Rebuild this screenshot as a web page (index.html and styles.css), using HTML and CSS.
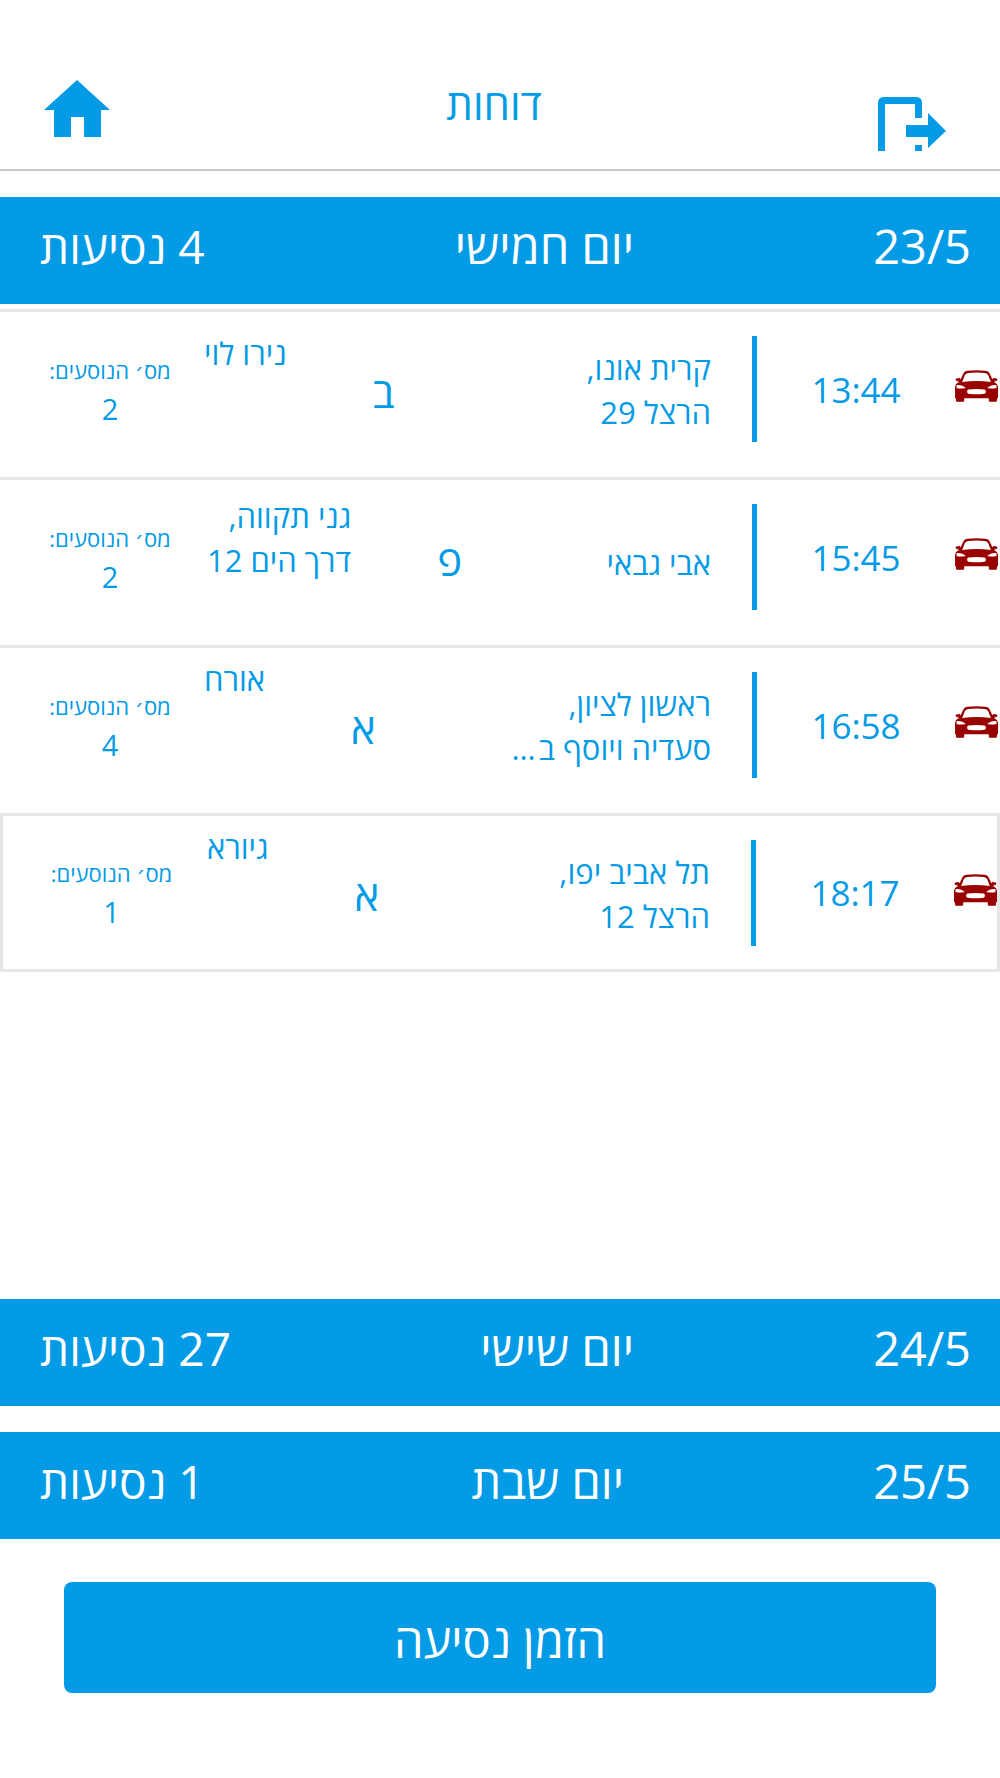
FILE: index.html
```html
<!DOCTYPE html>
<html lang="he" dir="rtl">
<head>
	<meta charset="UTF-8">
	<title>דוחות</title>
	<link rel="stylesheet" href="styles.css">
</head>
<body>
	<svg class="defs" width="0" height="0" aria-hidden="true">
		<symbol id="car" viewBox="0 0 42 31">
			<path fill-rule="evenodd" d="M5.5 9 L8 3.5 Q9 1 12.5 .7 Q21 -.3 29.5 .7 Q33 1 34 3.5 L36.5 9 L37.5 7.8 L41 8.2 L41.5 10 L38 11.5 Q42 13 42 17 L42 27.5 L41 27.5 L41 30 Q41 31 40 31 L34 31 Q33 31 33 30 L33 27.5 L9 27.5 L9 30 Q9 31 8 31 L2 31 Q1 31 1 30 L1 27.5 L0 27.5 L0 17 Q0 13 4 11.5 L.5 10 L1 8.2 L4.5 7.8 Z M7 11.5 Q21 9.5 35 11.5 L32.5 5 Q31.5 3 29 2.7 Q21 1.8 13 2.7 Q10.5 3 9.5 5 Z M1.5 14.5 Q7 14 10.5 17.5 Q5 18.5 1.5 17.5 Z M40.5 14.5 Q35 14 31.5 17.5 Q37 18.5 40.5 17.5 Z M13 19 Q21 18 29 19 Q31.5 21 29 23 Q21 24 13 23 Q10.5 21 13 19 Z"/>
		</symbol>
	</svg>

	<header class="topbar">
		<svg class="exit-icon" viewBox="0 0 68 54" aria-hidden="true">
			<path d="M0 54 V6 Q0 0 6 0 H38 Q44 0 44 6 V21 H37 V7 H7 V54 Z M37 48 H44 V54 H37 Z M28 28 H50 V16 L68 34 L50 51 V40 H28 Z"/>
		</svg>
		<h1 class="title">דוחות</h1>
		<svg class="home-icon" viewBox="0 0 66 57" aria-hidden="true">
			<path d="M33 0 L66 30 H57 V57 H40 V37 H27 V57 H10 V30 H0 Z"/>
		</svg>
	</header>

	<section class="day day-open">
		<div class="day-bar">
			<span class="day-date">23/5</span>
			<span class="day-name">יום חמישי</span>
			<span class="day-count">4 נסיעות</span>
		</div>
		<ul class="trips">
			<li class="trip">
				<svg class="car"><use href="#car"/></svg>
				<div class="time">13:44</div>
				<div class="origin">קרית אונו,<br>הרצל 29</div>
				<div class="target">
					<div class="letter">ב</div>
					<div class="dest dest-low">נירו לוי</div>
				</div>
				<div class="pax"><div class="pax-label">מס׳ הנוסעים:</div><div class="pax-num">2</div></div>
			</li>
			<li class="trip">
				<svg class="car"><use href="#car"/></svg>
				<div class="time">15:45</div>
				<div class="origin origin-single">אבי גבאי</div>
				<div class="target">
					<div class="letter">פ</div>
					<div class="dest dest-two">גני תקווה,<br>דרך הים 12</div>
				</div>
				<div class="pax"><div class="pax-label">מס׳ הנוסעים:</div><div class="pax-num">2</div></div>
			</li>
			<li class="trip">
				<svg class="car"><use href="#car"/></svg>
				<div class="time">16:58</div>
				<div class="origin">ראשון לציון,<br><span>סעדיה ויוסף ב<span class="dots">…</span></span></div>
				<div class="target">
					<div class="letter">א</div>
					<div class="dest">אורח</div>
				</div>
				<div class="pax"><div class="pax-label">מס׳ הנוסעים:</div><div class="pax-num">4</div></div>
			</li>
			<li class="trip trip-boxed">
				<svg class="car"><use href="#car"/></svg>
				<div class="time">18:17</div>
				<div class="origin">תל אביב יפו,<br>הרצל 12</div>
				<div class="target">
					<div class="letter">א</div>
					<div class="dest">גיורא</div>
				</div>
				<div class="pax"><div class="pax-label">מס׳ הנוסעים:</div><div class="pax-num">1</div></div>
			</li>
		</ul>
	</section>

	<section class="day">
		<div class="day-bar">
			<span class="day-date">24/5</span>
			<span class="day-name">יום שישי</span>
			<span class="day-count">27 נסיעות</span>
		</div>
	</section>

	<section class="day">
		<div class="day-bar">
			<span class="day-date">25/5</span>
			<span class="day-name day-name-shifted">יום שבת</span>
			<span class="day-count">1 נסיעות</span>
		</div>
	</section>

	<button class="order" type="button">הזמן נסיעה</button>
</body>
</html>
```

FILE: styles.css
```css
* {
	box-sizing: border-box;
}

html, body {
	margin: 0;
	padding: 0;
	background: white;
}

body {
	color: #039be5;
	font-family: "Open Sans", "Noto Sans", "DejaVu Sans", sans-serif;
	font-size: 31px;
}

.defs {
	position: absolute;
}

/* top bar */
.topbar {
	display: flex;
	justify-content: space-between;
	height: 171px;
	padding: 0 54px 0 44px;
	border-bottom: 2px solid #c8c8c8;
}

.title {
	margin: 80px 0 0;
	font-size: 42px;
	font-weight: 400;
	line-height: 48px;
}

.exit-icon {
	width: 68px;
	height: 54px;
	margin-top: 97px;
	fill: #039be5;
}

.home-icon {
	width: 66px;
	height: 57px;
	margin-top: 80px;
	fill: #039be5;
}

/* day sections */
.day {
	margin-bottom: 26px;
}

.day:first-of-type {
	margin-top: 26px;
}

.day-bar {
	display: flex;
	align-items: center;
	height: 107px;
	padding: 0 29px 10px 40px;
	background: #039be5;
	color: white;
	font-size: 47px;
}

.day-date {
	width: 337px;
	font-size: 47px;
}

.day-name-shifted {
	margin-right: 10px;
}

.day-count {
	margin-right: auto;
	font-size: 46px;
}

.day-open {
	height: 1076px;
}

/* trips */
.trips {
	margin: 5px 0 0;
	padding: 0;
	list-style: none;
	border-top: 3px solid #e6e6e6;
}

.trip {
	display: flex;
	align-items: center;
	height: 168px;
	padding-bottom: 11px;
	border-bottom: 3px solid #e6e6e6;
}

.trip-boxed {
	height: 159px;
	margin-top: -3px;
	padding-bottom: 0;
	border: 3px solid #e6e6e6;
}

.car {
	flex: none;
	width: 43px;
	height: 32px;
	margin: -6px 2px 0 0;
	fill: #990000;
}

.trip-boxed .car {
	margin-right: 0;
}

.time {
	width: 198px;
	font-size: 35px;
	text-align: center;
}

.origin {
	display: flex;
	flex-direction: column;
	justify-content: center;
	width: 260px;
	height: 106px;
	padding-top: 2px;
	padding-right: 41px;
	border-right: 5px solid #039be5;
	line-height: 44px;
	white-space: nowrap;
	overflow: hidden;
}

.origin-single {
	padding-top: 12px;
}

.dots {
	letter-spacing: 3px;
}

.target {
	flex: 1;
	display: flex;
	justify-content: flex-end;
	align-self: stretch;
	align-items: center;
}

.letter {
	margin-left: 86px;
	padding-top: 4px;
	font-size: 42px;
}

.dest {
	align-self: flex-start;
	padding-top: 9px;
	line-height: 44px;
	white-space: nowrap;
}

.dest-low {
	padding-top: 19px;
}

.dest-two {
	padding-top: 14px;
	padding-left: 3px;
}

.pax {
	width: 204px;
	padding-bottom: 2px;
	padding-left: 16px;
	text-align: center;
}

.trip-boxed .pax {
	padding-left: 13px;
}

.pax-label {
	font-size: 22px;
	line-height: 40px;
}

.pax-num {
	font-size: 29px;
	line-height: 37px;
}

/* bottom button */
.order {
	display: block;
	width: 872px;
	height: 111px;
	margin: 43px auto 0;
	padding-top: 6px;
	border: 0;
	border-radius: 8px;
	background: #039be5;
	color: white;
	font-family: inherit;
	font-size: 47px;
}
```
